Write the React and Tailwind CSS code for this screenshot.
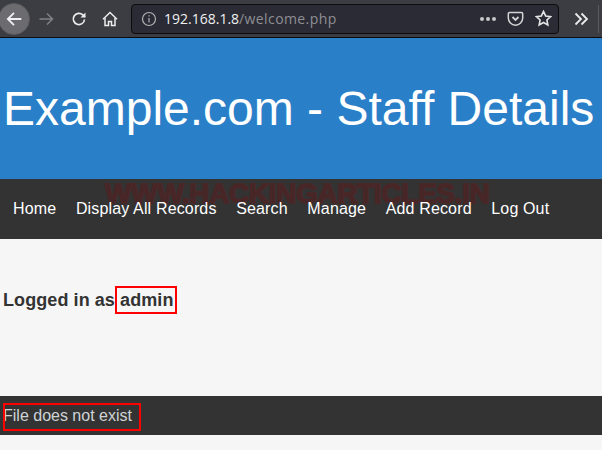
import React from "react";

const links = ["Home", "Display All Records", "Search", "Manage", "Add Record", "Log Out"];

const App = () => {
  return (
    <div className="h-[450px] w-[602px] overflow-hidden bg-[#f6f6f6] font-['Liberation_Sans',sans-serif]">
      {/* browser toolbar */}
      <div className="flex h-[38px] items-center border-b border-[#0c0c0d] bg-[#3c3d42] font-['Open_Sans',sans-serif]">
        <div className="ml-[-2px] flex h-[32px] w-[32px] shrink-0 items-center justify-center rounded-full border border-[#5a5a5f] bg-[#6c6c70]">
          <svg width="18" height="18" viewBox="0 0 16 16" fill="none" stroke="#f0f0f2" strokeWidth="1.6">
            <path d="M14.500 8H2.500M8 2.500 2.500 8 8 13.500" />
          </svg>
        </div>
        <svg className="ml-[8px] shrink-0" width="17" height="16" viewBox="0 0 16 16" fill="none" stroke="#808085" strokeWidth="1.5">
          <path d="M1 8h13M8.500 2.500 14 8l-5.500 5.500" />
        </svg>
        <svg className="ml-[16px] shrink-0" width="16" height="16" viewBox="0 0 16 16" fill="none" stroke="#ececee" strokeWidth="1.7">
          <path d="M13.500 8.500A5.600 5.600 0 1 1 11.800 3.900L14 6" />
          <path d="M14.500 1.500V6.500H9.500" fill="#ececee" stroke="none" />
        </svg>
        <svg className="ml-[15px] shrink-0" width="16" height="16" viewBox="0 0 16 16" fill="none" stroke="#ececee" strokeWidth="1.500">
          <path d="M1 8.300 8 1.500l7 6.800" />
          <path d="M3 7v7.500h3.500v-4h3v4H13V7" />
        </svg>
        <div className="ml-[13px] flex h-[30px] w-[428px] shrink-0 items-center rounded border border-[#0c0c0d] bg-[#2a2b34] pl-[9px] pr-[6px]">
          <svg width="16" height="16" viewBox="0 0 16 16" fill="none" stroke="#b1b1b3" strokeWidth="1.200">
            <circle cx="8" cy="8" r="6.500" />
            <path d="M8 7v4.500M8 4.200v1.300" />
          </svg>
          <span className="ml-[7px] text-[14px] leading-none text-[#f0f0f2]">
            192.168.1.8<span className="tracking-[0.4px] text-[#8f8f94]">/welcome.php</span>
          </span>
          <div className="ml-auto flex items-center">
            <span className="flex gap-[2px]">
              <span className="h-[4px] w-[4px] rounded-full bg-[#c8c8ca]" />
              <span className="h-[4px] w-[4px] rounded-full bg-[#c8c8ca]" />
              <span className="h-[4px] w-[4px] rounded-full bg-[#c8c8ca]" />
            </span>
            <svg className="ml-[11px]" width="17" height="16" viewBox="0 0 17 16" fill="none" stroke="#d4d4d6" strokeWidth="1.500">
              <path d="M2.500 1.500h12a1.200 1.200 0 0 1 1.200 1.200V7a7.200 7.200 0 0 1-14.400 0V2.700a1.200 1.200 0 0 1 1.200-1.200Z" />
              <path d="m5.500 6 3 3 3-3" strokeWidth="1.800" />
            </svg>
            <svg className="ml-[11px]" width="17" height="17" viewBox="0 0 16 16" fill="none" stroke="#e4e4e6" strokeWidth="1.500">
              <path d="m8 1.300 2 4.300 4.700.6-3.500 3.200.9 4.700L8 11.800l-4.100 2.300.9-4.700L1.300 6.200 6 5.600Z" />
            </svg>
          </div>
        </div>
        <svg className="ml-[14px] shrink-0" width="16" height="16" viewBox="0 0 16 16" fill="none" stroke="#ececee" strokeWidth="1.800">
          <path d="m2.500 2.500 5.500 5.500-5.500 5.500M8.500 2.500 14 8l-5.500 5.500" />
        </svg>
        <span className="ml-[9px] h-[28px] w-px shrink-0 bg-[#5a5a5f]" />
      </div>

      <header className="flex h-[141px] items-center justify-start bg-[#2a7fc9] pl-[3px]">
        <h1 className="whitespace-nowrap text-[48px] font-normal leading-none text-white">
          Example.com - Staff Details
        </h1>
      </header>

      <nav className="relative flex h-[60px] items-start gap-[19.6px] bg-[#333333] pl-[13px] pt-[21px] text-[16px] leading-[18px] tracking-[0.15px] text-white">
        {/* watermark */}
        <span className="absolute left-[105px] top-[1px] whitespace-nowrap text-[28px] font-bold leading-[28px] tracking-[-0.35px] text-[#452728] [-webkit-text-stroke:1.5px_#4c2627]">
          WWW.HACKINGARTICLES.IN
        </span>
        {links.map((l) => (
          <a key={l} href="#" className="relative whitespace-nowrap">
            {l}
          </a>
        ))}
      </nav>

      <main className="h-[157px] pl-[3px] pt-[50px]">
        <p className="whitespace-nowrap text-[18px] font-bold leading-[22px] tracking-[0.08px] text-[#333333]">
          Logged in as{" "}
          <span className="relative">
            admin
            <span className="absolute left-[-5px] right-[-4px] top-[-4px] h-[28px] border-2 border-[#ff0000]" />
          </span>
        </p>
      </main>

      <footer className="relative flex h-[39px] items-center bg-[#333333] pl-[3px] text-[16px] text-[#cfd3d6]">
        <span>File does not exist</span>
        <span className="absolute left-[3px] top-[7px] h-[28px] w-[138px] border-2 border-[#ff0000]" />
      </footer>
    </div>
  );
};

export default App;
